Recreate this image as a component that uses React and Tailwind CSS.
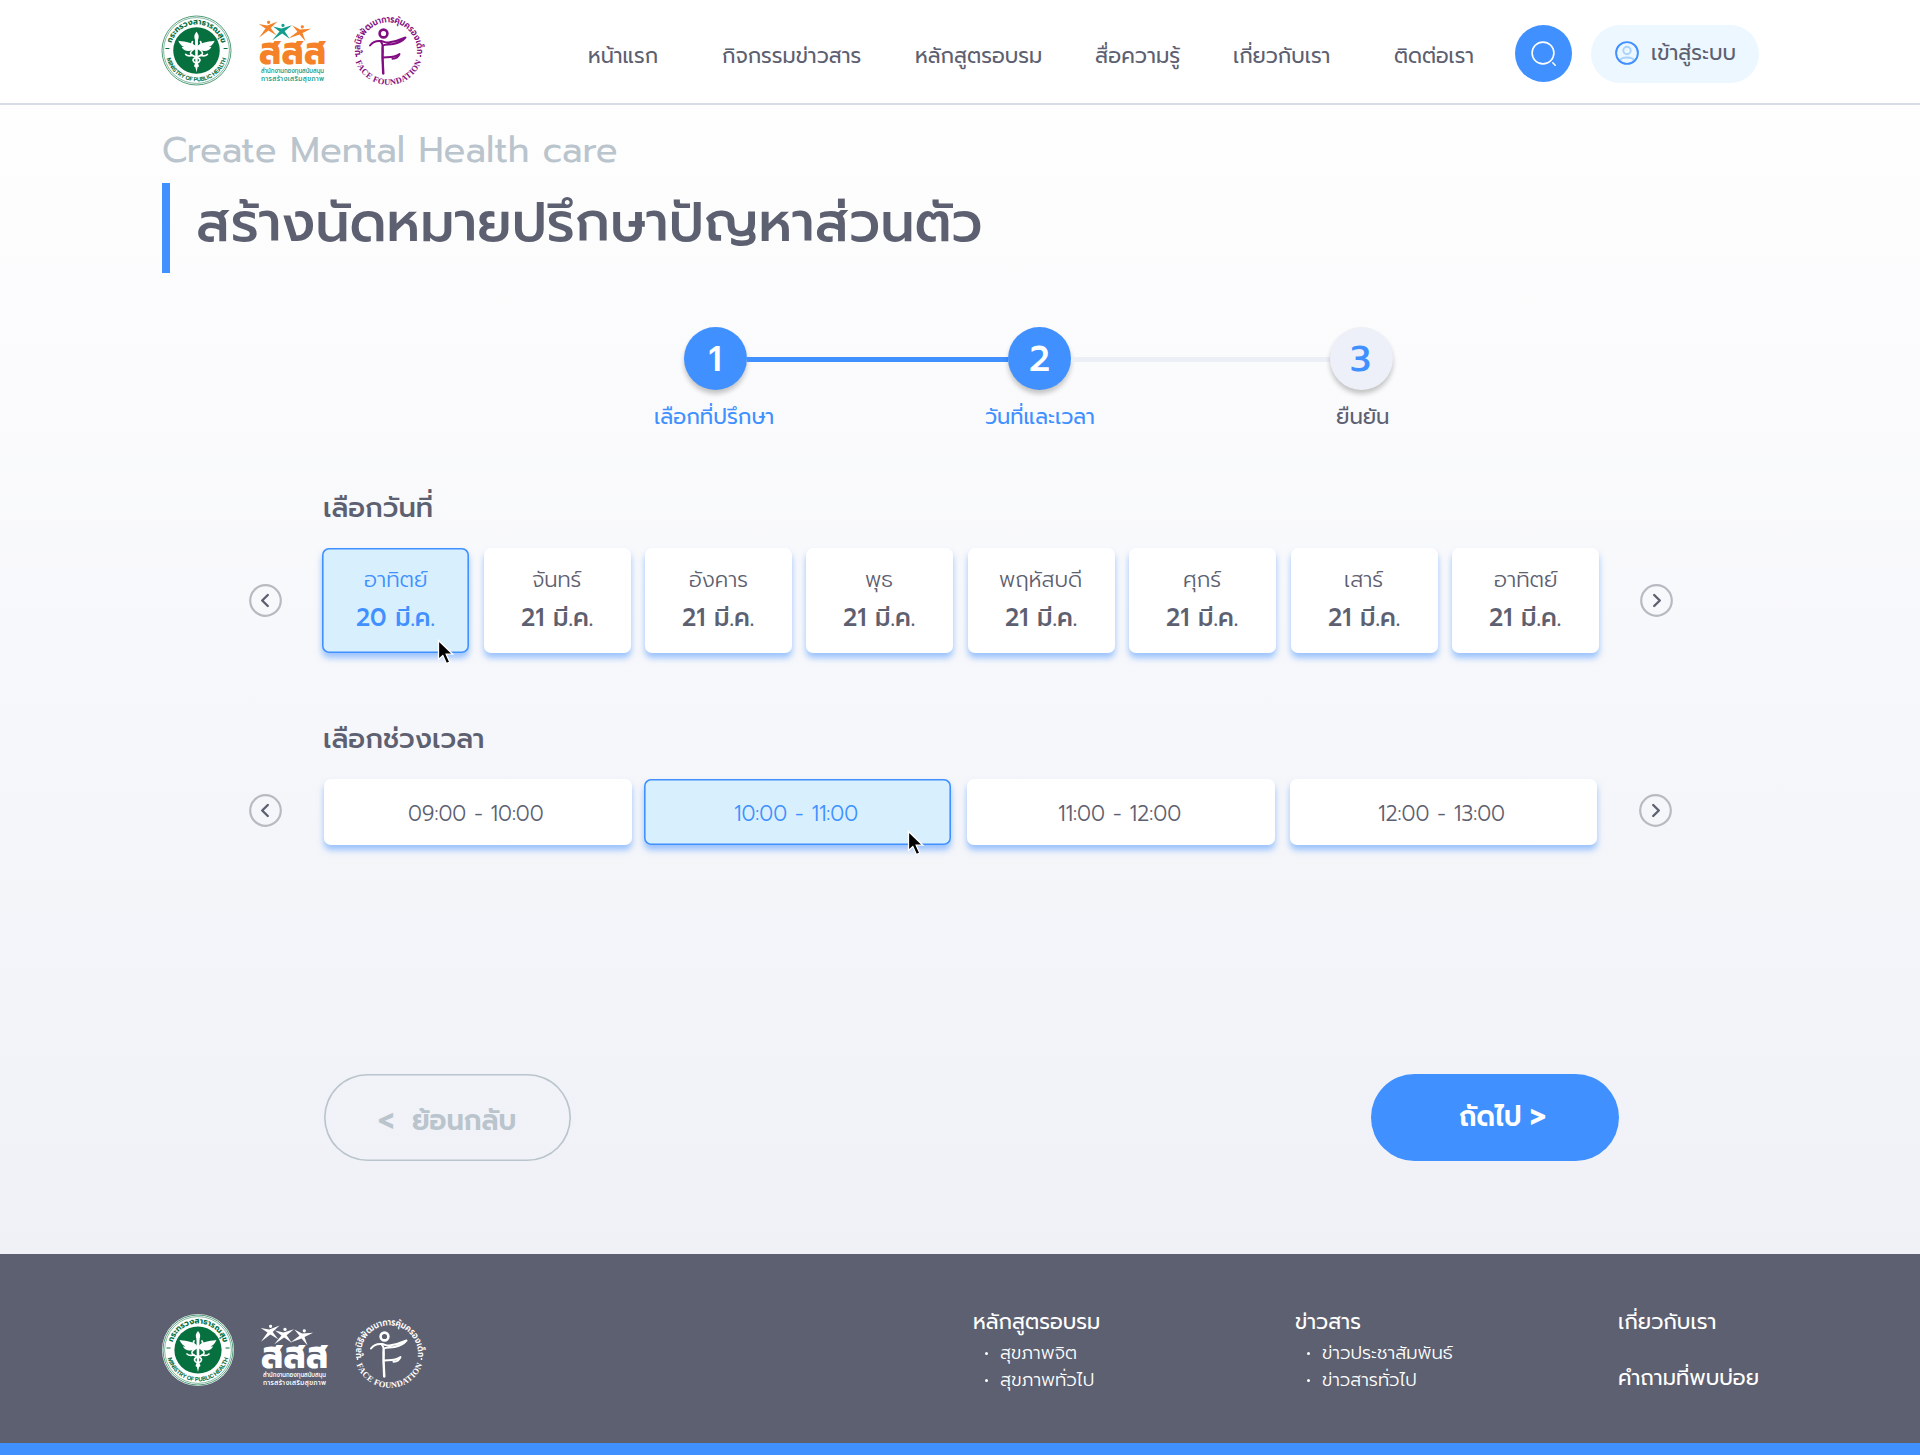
import { useLayoutEffect, useRef, useState } from "react";

/* A line of text stretched to the width of its box. */
function Fit({ className, children }) {
  const box = useRef(null);
  const text = useRef(null);
  const [scale, setScale] = useState(1);
  useLayoutEffect(() => {
    setScale(box.current.clientWidth / text.current.offsetWidth);
  }, []);
  return (
    <span ref={box} className={`block shrink-0 whitespace-nowrap ${className}`}>
      <span ref={text} className="inline-block origin-left" style={{ transform: `scaleX(${scale})` }}>
        {children}
      </span>
    </span>
  );
}

function MinistryLogo({ id, className }) {
  return (
    <svg viewBox="0 0 72 72" overflow="visible" className={className}>
      <defs>
        <path id={`${id}-top`} d="M 9.5 36 A 26.5 26.5 0 0 1 62.5 36" />
        <path id={`${id}-bottom`} d="M 4.6 36 A 31.4 31.4 0 0 0 67.4 36" />
      </defs>
      <circle cx="36" cy="36" r="36" fill="#fff" />
      <circle cx="36" cy="36" r="35" fill="none" stroke="#06703f" strokeWidth="0.7" />
      <circle cx="36" cy="36" r="33.4" fill="none" stroke="#06703f" strokeWidth="0.5" />
      <circle cx="36" cy="36" r="23.6" fill="#06703f" />
      <g fill="#06703f" fontWeight="700">
        <text fontSize="8">
          <textPath href={`#${id}-top`} startOffset="9%" textLength="68" lengthAdjust="spacingAndGlyphs">กระทรวงสาธารณสุข</textPath>
        </text>
        <text fontSize="5.8" fontFamily="Inter">
          <textPath href={`#${id}-bottom`} startOffset="50%" textAnchor="middle" textLength="82">MINISTRY OF PUBLIC HEALTH</textPath>
        </text>
      </g>
      <path d="M4.500 34h4M63.500 34h4" stroke="#06703f" strokeWidth="1.2" />
      <g fill="#fff">
        <path d="M36 17c2 2.500 2.600 4 2 6.500l-.8 2.500h-2.400l-.8-2.500c-.6-2.500 0-4 2-6.500z" />
        <path d="M34.500 25h3l-.4 28L36 58l-1.100-5z" />
        <path d="M34.500 31c-4-3.500-8-3.700-17-5 1.500 3.500 3.500 5.500 6 6.400-1.500.2-2 0-2.700-.2 1.500 3.200 4.500 4.500 7.200 4.300 2.500-.2 5-1.500 6.500-2.500z" />
        <path d="M37.500 31c4-3.500 8-3.700 17-5-1.500 3.500-3.500 5.500-6 6.400 1.500.2 2 0 2.700-.2-1.500 3.200-4.500 4.500-7.200 4.300-2.500-.2-5-1.500-6.500-2.500z" />
      </g>
      <g fill="none" stroke="#fff" strokeWidth="1.700" strokeLinecap="round">
        <path d="M32 27c-4 5 11 7 10 12-1 4-10 3-9.500 7 .4 3 5.500 2.500 5 6" />
        <path d="M40 27c4 5-11 7-10 12 1 4 10 3 9.500 7-.4 3-5.500 2.500-5 6" />
        <path d="M25 40c2 2 4 1.800 7 1M47 40c-2 2-4 1.800-7 1" />
      </g>
    </svg>
  );
}

/* Leaping star figure. */
function Star({ x, y, fill, rotate = 0 }) {
  return (
    <g transform={`translate(${x} ${y}) rotate(${rotate}) scale(1.15)`} fill={fill}>
      <circle cx="1.200" cy="-4.800" r="1.400" />
      <path d="M-7.500-4.500-.3-2.200 9-4.400 2.300.4 6.200 7.200 0 2.200-9 7.400-2.200.2z" />
    </g>
  );
}

function HealthFundLogo({ main, accent, className }) {
  return (
    <svg viewBox="0 0 70 64" overflow="visible" className={className}>
      <Star x={10} y={10} fill={main} rotate={-8} />
      <Star x={24} y={13} fill={accent} rotate={-4} />
      <Star x={42} y={14} fill={main} rotate={10} />
      <text x="1" y="46" fontSize="40" fontWeight="700" fill={main} textLength="67.500" lengthAdjust="spacingAndGlyphs">สสส</text>
      <text x="3" y="55" fontSize="6.400" fontWeight="500" fill={accent} textLength="63" lengthAdjust="spacingAndGlyphs">สำนักงานกองทุนสนับสนุน</text>
      <text x="3" y="62.500" fontSize="6.400" fontWeight="500" fill={accent} textLength="63">การสร้างเสริมสุขภาพ</text>
    </svg>
  );
}

function FaceLogo({ id, color, className }) {
  return (
    <svg viewBox="0 0 72 72" overflow="visible" className={className}>
      <defs>
        <path id={`${id}-top`} d="M 7.500 41 A 28.500 28.500 0 1 1 63.500 41" />
        <path id={`${id}-bottom`} d="M 1.200 41 A 34.800 34.800 0 0 0 69.800 41" />
      </defs>
      <g fill={color} fontWeight="600">
        <text fontSize="9.500">
          <textPath href={`#${id}-top`} startOffset="1%" textLength="97" lengthAdjust="spacingAndGlyphs">มูลนิธิพัฒนาการคุ้มครองเด็ก</textPath>
        </text>
        <text fontSize="8.500" fontWeight="700" fontFamily="Liberation Serif">
          <textPath href={`#${id}-bottom`} startOffset="50%" textAnchor="middle" textLength="86">FACE FOUNDATION</textPath>
        </text>
      </g>
      <circle cx="3.500" cy="41" r="0.900" fill={color} />
      <circle cx="67.500" cy="41" r="0.900" fill={color} />
      <circle cx="30.500" cy="18.500" r="3.900" fill="none" stroke={color} strokeWidth="2.600" />
      <g fill="none" stroke={color} strokeWidth="2" strokeLinecap="round" strokeLinejoin="round">
        <path d="M17 30.500c3-4 7-5 11-4.500 3 .4 4 2 7.500 1.500C42 26.500 47 25 52.500 22.500c-3 3.500-7 5.500-12 6.500-4 .8-9 .5-10.500 1.500-1.500 2 0 8-.5 14l.500 14" />
        <path d="M28 27c2.500 2 2 9 1.500 14l1 17.500M30 42.500c6-.5 11 .5 16.500-3.500-1 3-3 4.500-7 4.700" />
      </g>
    </svg>
  );
}

function ArrowButton({ flip }) {
  return (
    <svg viewBox="0 0 33 33" className={`h-[33px] w-[33px] shrink-0 ${flip ? "rotate-180" : ""}`} fill="none">
      <circle cx="16.500" cy="16.500" r="15.300" stroke="#b8bac2" strokeWidth="2.200" />
      <path d="M18.800 11l-5.600 5.500 5.600 5.500" stroke="#5d6070" strokeWidth="2.400" strokeLinecap="round" strokeLinejoin="round" />
    </svg>
  );
}

function Cursor({ className }) {
  return (
    <svg viewBox="0 0 18 26" className={`absolute h-[26px] w-[18px] ${className}`}>
      <path d="M1.500 1.500v19l4.300-4 3.600 8 3.300-1.400-3.500-7.900h6.600z" fill="#000" stroke="#fff" strokeWidth="1.300" />
    </svg>
  );
}

const nav = [
  ["หน้าแรก", "w-[70px]"],
  ["กิจกรรมข่าวสาร", "ml-[64px] w-[139px]"],
  ["หลักสูตรอบรม", "ml-[54px] w-[127px]"],
  ["สื่อความรู้", "ml-[53px] w-[85px]"],
  ["เกี่ยวกับเรา", "ml-[53px] w-[97px]"],
  ["ติดต่อเรา", "ml-[64px] w-[80px]"],
];

const days = [
  ["อาทิตย์", "w-[63px]", "20 มี.ค.", "w-[79px]"],
  ["จันทร์", "w-[49px]", "21 มี.ค.", "w-[72px]"],
  ["อังคาร", "w-[59px]", "21 มี.ค.", "w-[72px]"],
  ["พุธ", "w-[28px]", "21 มี.ค.", "w-[72px]"],
  ["พฤหัสบดี", "w-[83px]", "21 มี.ค.", "w-[72px]"],
  ["ศุกร์", "w-[38px]", "21 มี.ค.", "w-[72px]"],
  ["เสาร์", "w-[39px]", "21 มี.ค.", "w-[72px]"],
  ["อาทิตย์", "w-[63px]", "21 มี.ค.", "w-[72px]"],
];

const slots = [
  ["09:00 - 10:00", "w-[136px]", "ml-[42px]"],
  ["10:00 - 11:00", "w-[124px]", "ml-[12px]"],
  ["11:00 - 12:00", "w-[123px]", "ml-[16px]"],
  ["12:00 - 13:00", "w-[127px]", "ml-[15px]"],
];

const cardBase = "relative flex shrink-0 flex-col items-center rounded-[7px]";
const cardIdle = "bg-white text-[#5d6070] shadow-[0_5px_6px_rgba(64,144,255,0.5)]";
const cardActive = "bg-[#d8effd] text-[#4090ff] shadow-[inset_0_0_0_1.6px_#4090ff,0_5px_6px_rgba(64,144,255,0.5)]";

function FooterList({ title, titleWidth, items, className }) {
  return (
    <div className={className}>
      <Fit className={`text-[22px] leading-8 ${titleWidth}`}>{title}</Fit>
      <ul className="pt-0.5 pl-3 text-[18px] leading-[27px] font-light">
        {items.map(([label, width]) => (
          <li key={label} className="flex items-center">
            <span className="mr-3 h-[3px] w-[3px] rounded-full bg-white" />
            <Fit className={width}>{label}</Fit>
          </li>
        ))}
      </ul>
    </div>
  );
}

export default function App() {
  return (
    <div className="flex h-[1455px] w-[1920px] flex-col overflow-hidden bg-white font-['Prompt','Kanit','Inter','Noto_Sans_Thai','Noto_Sans',sans-serif] text-[#5d6070]">
      <header className="flex h-[105px] shrink-0 items-start border-b-2 border-[#d6dde6] pl-[161px]">
        <MinistryLogo id="moph" className="mt-[15px] h-[71px] w-[71px]" />
        <HealthFundLogo main="#f58229" accent="#139e8b" className="mt-[18px] ml-[26px] h-[64px] w-[70px]" />
        <FaceLogo id="face" color="#820d82" className="mt-[15px] ml-[25px] h-[72px] w-[72px]" />
        <nav className="mt-10 ml-[163px] flex text-[22px] leading-8">
          {nav.map(([label, width]) => (
            <Fit key={label} className={width}>{label}</Fit>
          ))}
        </nav>
        <button className="mt-[25px] ml-[41px] flex h-[57px] w-[57px] shrink-0 items-center justify-center rounded-full bg-[#4090ff]">
          <svg viewBox="0 0 26 26" className="h-[26px] w-[26px]" fill="none" stroke="#fff" strokeWidth="1.600" strokeLinecap="round">
            <circle cx="12" cy="12" r="10.900" />
            <path d="M21.800 21.800l2.400 2.400" />
          </svg>
        </button>
        <button className="mt-[25px] ml-[19px] flex h-[58px] w-[168px] shrink-0 rounded-full bg-[#ecf7ff] pl-6">
          <svg viewBox="0 0 24 24" className="mt-4 h-6 w-6" fill="none" stroke="#a9d2ff" strokeWidth="1.900">
            <circle cx="12" cy="9.500" r="3.700" />
            <path d="M5 19.500c1.500-4 12.500-4 14 0" />
            <circle cx="12" cy="12" r="10.900" stroke="#4090ff" />
          </svg>
          <Fit className="mt-3 ml-3 w-[85px] text-left text-[22px] leading-8">เข้าสู่ระบบ</Fit>
        </button>
      </header>

      <main className="h-[1149px] shrink-0 bg-linear-to-b from-[#fefefe] to-[#eff1f7] pt-[21px]">
        <Fit className="ml-[162px] w-[456px] text-[37px] leading-[48px] text-[#b9c4cc]">Create Mental Health care</Fit>
        <div className="mt-[9px] ml-[162px] h-[90px] border-l-8 border-[#4090ff] pl-[26px]">
          <h1>
            <Fit className="w-[787px] text-[55px] leading-[80px] font-medium">สร้างนัดหมายปรึกษาปัญหาส่วนตัว</Fit>
          </h1>
        </div>

        <div className="mt-[54px] ml-[684px] flex items-center text-[36px] font-medium text-white">
          <div className="flex h-[63px] w-[63px] items-center justify-center rounded-full bg-[#4090ff] pr-px shadow-[0_4px_5px_rgba(0,0,0,0.22)]">1</div>
          <div className="mt-0.5 h-[4.500px] w-[261px] bg-[#4090ff]" />
          <div className="flex h-[63px] w-[63px] items-center justify-center rounded-full bg-[#4090ff] shadow-[0_4px_5px_rgba(0,0,0,0.22)]">2</div>
          <div className="mt-0.5 h-[4.500px] w-[259px] bg-[#edeff6]" />
          <div className="flex h-[63px] w-[63px] items-center justify-center rounded-full bg-[#edf0f8] pr-0.5 text-[#4090ff] shadow-[0_4px_5px_rgba(0,0,0,0.22)]">3</div>
        </div>
        <div className="mt-[12px] ml-[654px] flex text-[22px] leading-[30px] text-[#4090ff]">
          <Fit className="w-[120px]">เลือกที่ปรึกษา</Fit>
          <Fit className="ml-[211px] w-[110px]">วันที่และเวลา</Fit>
          <Fit className="ml-[241px] w-[53px] text-[#5d6070]">ยืนยัน</Fit>
        </div>

        <Fit className="mt-[58px] ml-[323px] w-[110px] text-[27.500px] leading-9 font-medium">เลือกวันที่</Fit>
        <div className="mt-[22px] ml-[249px] flex items-center">
          <ArrowButton />
          <div className="mr-[41px] ml-[40.300px] flex gap-[14.400px]">
            {days.map(([day, dayWidth, date, dateWidth], i) => (
              <div key={i} className={`h-[105px] w-[147px] pt-4 pr-px ${cardBase} ${i === 0 ? cardActive : cardIdle}`}>
                <Fit className={`text-[22px] leading-8 font-light ${dayWidth}`}>{day}</Fit>
                <Fit className={`mt-[5px] text-[25px] leading-[34px] font-medium ${dateWidth}`}>{date}</Fit>
                {i === 0 && <Cursor className="top-[91px] left-[115px]" />}
              </div>
            ))}
          </div>
          <ArrowButton flip />
        </div>

        <Fit className="mt-[68px] ml-[323px] w-[161px] text-[27.500px] leading-9 font-medium">เลือกช่วงเวลา</Fit>
        <div className="mt-[22px] ml-[249px] flex items-center">
          <div className="-mt-1"><ArrowButton /></div>
          {slots.map(([label, width, margin], i) => (
            <div key={label} className={`h-[66px] w-[307.500px] justify-center pt-px pr-[3px] ${margin} ${cardBase} ${i === 1 ? cardActive : cardIdle}`}>
              <Fit className={`text-[22.500px] leading-8 font-light ${width}`}>{label}</Fit>
              {i === 1 && <Cursor className="top-[51px] left-[263px]" />}
            </div>
          ))}
          <div className="-mt-1 ml-[42px]"><ArrowButton flip /></div>
        </div>

        <div className="mt-[229px] ml-[324px] flex gap-[800px] text-[28px] leading-10 font-semibold">
          <button className="flex h-[87px] w-[247px] shrink-0 rounded-full pt-[27px] pl-[54px] text-[#b9c4cc] shadow-[inset_0_0_0_1.6px_#b9c4cc]">
            <Fit className="w-[16px]">&lt;</Fit>
            <Fit className="ml-[18px] w-[104px]">ย้อนกลับ</Fit>
          </button>
          <button className="flex h-[87px] w-[248px] shrink-0 rounded-full bg-[#4090ff] pt-[23px] pl-[88px] text-white">
            <Fit className="w-[63px]">ถัดไป</Fit>
            <Fit className="ml-[8px] w-[16px]">&gt;</Fit>
          </button>
        </div>
      </main>

      <footer className="flex h-[201px] shrink-0 items-start border-b-12 border-[#4090ff] bg-[#5d6070] pl-[162px] text-white">
        <MinistryLogo id="moph-footer" className="mt-[60px] h-[72px] w-[72px]" />
        <HealthFundLogo main="#fff" accent="#fff" className="mt-[68px] ml-[26px] h-[64px] w-[70px]" />
        <FaceLogo id="face-footer" color="#fff" className="mt-[64px] ml-[24px] h-[72px] w-[72px]" />
        <FooterList
          className="mt-[52px] ml-[547px] w-[322px]"
          title="หลักสูตรอบรม"
          titleWidth="w-[127px]"
          items={[["สุขภาพจิต", "w-[77px]"], ["สุขภาพทั่วไป", "w-[94px]"]]}
        />
        <FooterList
          className="mt-[52px] w-[323px]"
          title="ข่าวสาร"
          titleWidth="w-[66px]"
          items={[["ข่าวประชาสัมพันธ์", "w-[131px]"], ["ข่าวสารทั่วไป", "w-[95px]"]]}
        />
        <div className="mt-[52px] flex flex-col gap-6 text-[22px] leading-8">
          <Fit className="w-[98px]">เกี่ยวกับเรา</Fit>
          <Fit className="w-[141px]">คำถามที่พบบ่อย</Fit>
        </div>
      </footer>
    </div>
  );
}
